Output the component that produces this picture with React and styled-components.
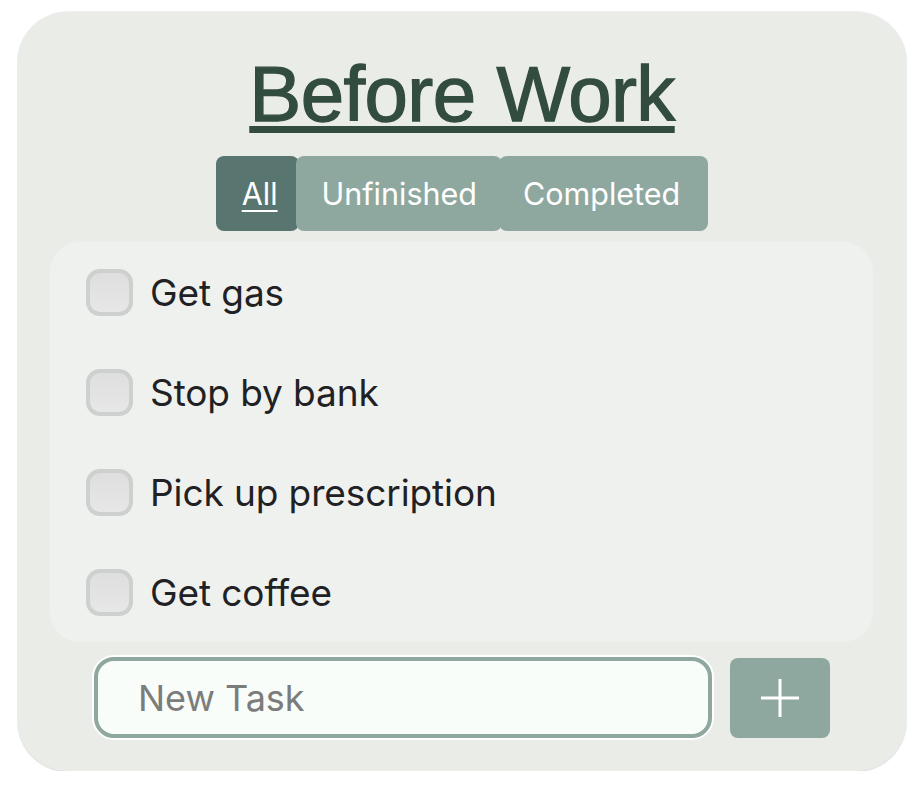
import React, { useState } from "react";
import styled, { createGlobalStyle } from "styled-components";

const Global = createGlobalStyle`
  html, body { margin: 0; padding: 0; background: #ffffff; }
  body { font-family: Inter, "Noto Sans", sans-serif; }
  * { box-sizing: border-box; }
`;

const Card = styled.div`
  margin: 12px 18px 0 18px;
  width: 888px;
  height: 759px;
  background: #eaece8;
  border-radius: 50px;
  box-shadow: 0 0 0 1px rgba(0,0,0,0.05), 0 1px 2px rgba(0,0,0,0.10);
  padding: 43px 32px 0 32px;
  display: flex;
  flex-direction: column;
  align-items: center;
`;

const Title = styled.h1`
  margin: 0;
  font-family: "Liberation Sans", Arial, sans-serif;
  font-weight: 400;
  font-size: 78px;
  line-height: 78px;
  letter-spacing: -0.6px;
  color: #334c40;
  -webkit-text-stroke: 1.3px #334c40;
  text-decoration: underline;
  text-decoration-thickness: 7px;
  text-underline-offset: 5px;
`;

const Tabs = styled.div`
  margin-top: 23px;
  display: flex;
  height: 75px;
`;

const Tab = styled.button`
  border: none;
  margin: 0;
  height: 75px;
  padding: 0 ${p => p.$pr}px 0 ${p => p.$pl}px;
  margin-left: ${p => (p.$first ? 0 : -3)}px;
  border-radius: 8px;
  background: ${p => (p.$active ? "#587570" : "#8fa89f")};
  color: #ffffff;
  font-family: Inter, "Noto Sans", sans-serif;
  font-size: 30.5px;
  text-decoration: ${p => (p.$active ? "underline" : "none")};
  text-decoration-thickness: 2px;
  text-underline-offset: 5px;
  cursor: pointer;
`;

const Panel = styled.ul`
  list-style: none;
  margin: 11px 0 0 0;
  padding: 0 0 0 36px;
  width: 823px;
  background: #eff1ee;
  border-radius: 30px;
  align-self: flex-start;
`;

const Row = styled.li`
  height: 100px;
  display: flex;
  align-items: center;
  gap: 17px;
`;

const Check = styled.span`
  width: 47px;
  height: 47px;
  border-radius: 14px;
  border: 4px solid #cdd0cf;
  background: linear-gradient(#dedede, #e7e7e7);
  flex-shrink: 0;
`;

const Label = styled.span`
  font-family: Inter, "Noto Sans", sans-serif;
  font-size: 37px;
  color: #1f2124;
  letter-spacing: -0.1px;
`;

const InputRow = styled.div`
  margin-top: 15px;
  display: flex;
  align-items: flex-start;
  gap: 18px;
`;

const TaskInput = styled.input`
  width: 618px;
  height: 81px;
  border: 4px solid #8fa89f;
  border-radius: 20px;
  background: #f8fdf9;
  box-shadow: 0 0 0 2px #ffffff;
  padding: 0 0 0 40px;
  font-family: Inter, "Noto Sans", sans-serif;
  font-size: 36px;
  color: #1f2124;
  caret-color: #000000;
  outline: none;
  &::placeholder { color: #7b7c7b; }
`;

const AddButton = styled.button`
  margin-top: 1px;
  width: 100px;
  height: 80px;
  border: none;
  border-radius: 8px;
  background: #8fa89f;
  display: flex;
  align-items: center;
  justify-content: center;
  padding: 0;
`;

const tasks = ["Get gas", "Stop by bank", "Pick up prescription", "Get coffee"];

export default function App() {
  const [val, setVal] = useState("");
  return (
    <>
      <Global />
      <Card>
        <Title>Before Work</Title>
        <Tabs>
          <Tab $active $first $pl={26} $pr={21}>All</Tab>
          <Tab $pl={26} $pr={25}>Unfinished</Tab>
          <Tab $pl={24} $pr={28}>Completed</Tab>
        </Tabs>
        <Panel>
          {tasks.map(t => (
            <Row key={t}>
              <Check />
              <Label>{t}</Label>
            </Row>
          ))}
        </Panel>
        <InputRow>
          <TaskInput autoFocus placeholder="New Task" value={val} onChange={e => setVal(e.target.value)} />
          <AddButton aria-label="Add">
            <svg width="40" height="40" viewBox="0 0 40 40">
              <path d="M20 1 V39 M1 20 H39" stroke="#ffffff" strokeWidth="3" />
            </svg>
          </AddButton>
        </InputRow>
      </Card>
    </>
  );
}
